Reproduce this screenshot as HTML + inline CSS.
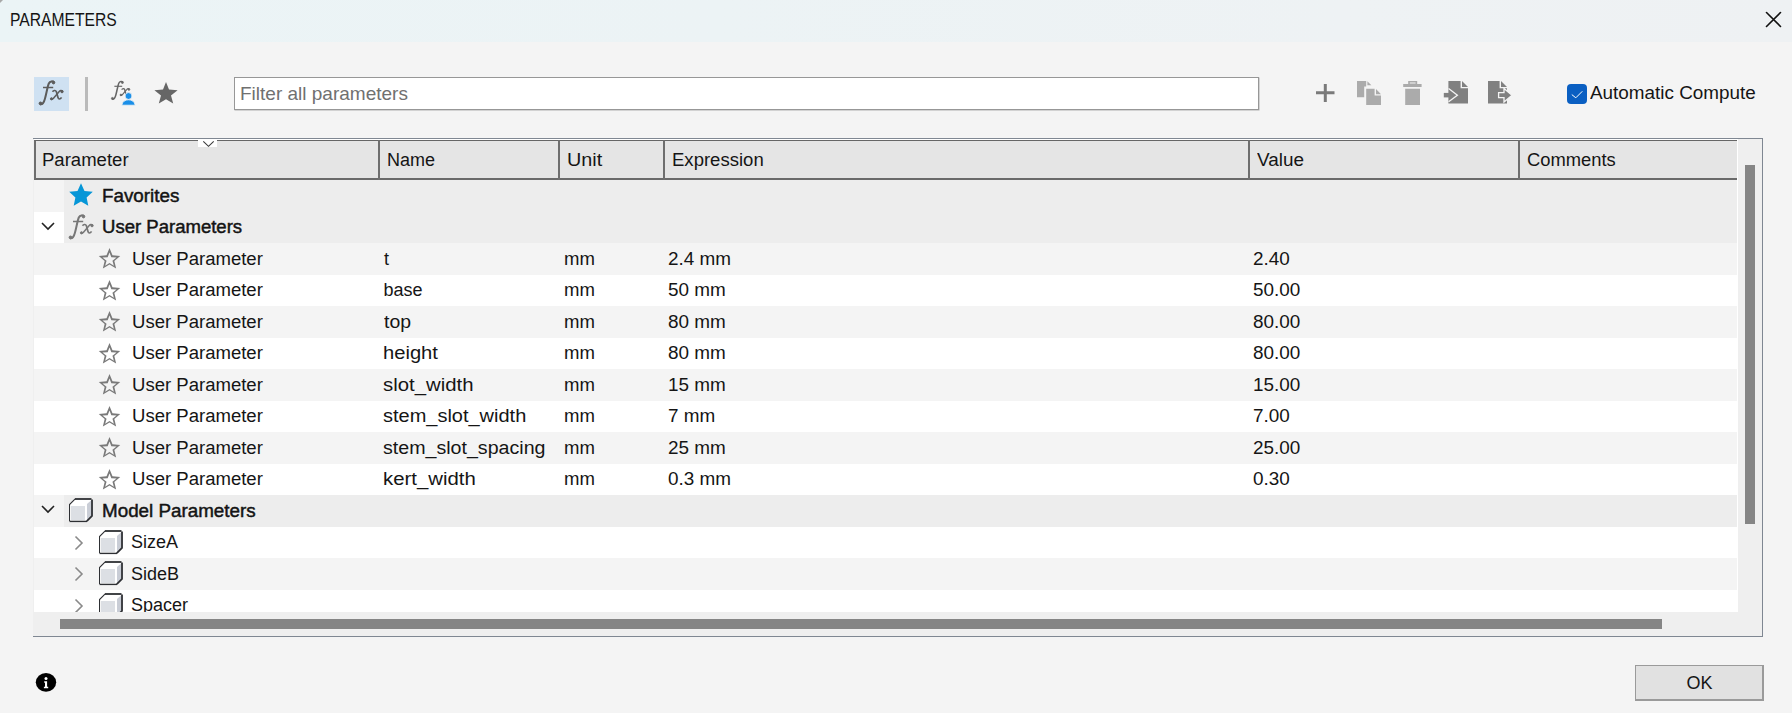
<!DOCTYPE html>
<html><head><meta charset="utf-8">
<style>
*{box-sizing:border-box;margin:0;padding:0}
html,body{width:1792px;height:713px;overflow:hidden;background:#f4f4f4;font-family:"Liberation Sans",sans-serif;font-size:18px;color:#151515;position:relative}
.a{position:absolute}
.t{position:absolute;white-space:pre;line-height:20px}
#title{left:0;top:0;width:1792px;height:42px;background:linear-gradient(90deg,#ebf4f6 0%,#ecf3f5 40%,#eef2f4 75%,#eef1f3 100%)}
.row{position:absolute;left:34px;width:1703px}
.g{background:#f4f4f4}
.w{background:#fff}
.grp{position:absolute;left:30px;right:0;top:0;bottom:0;background:#ededed}
.hdr{position:absolute;top:140px;height:40px;background:#e5e5e5;border-top:1px solid #666;border-bottom:2px solid #6a6a6a}
.sep{position:absolute;top:140px;height:40px;width:2px;background:#6e6e6e}
.b{-webkit-text-stroke:0.45px #111;transform:scaleX(1.045);transform-origin:0 0}
</style></head><body>
<div id="title" class="a"></div>
<div class="a" style="left:0;top:0;width:0;height:0;border-top:3px solid #a8a8a8;border-right:3px solid transparent"></div>
<div class="t" style="left:10px;top:10px;font-size:18px;transform:scaleX(0.87);transform-origin:0 0">PARAMETERS</div>
<svg class="a" style="left:1760px;top:6px" width="28" height="28" viewBox="0 0 28 28"><path d="M6.5 6.5L20.5 20.5M20.5 6.5L6.5 20.5" stroke="#111" stroke-width="1.6" stroke-linecap="round"/></svg>

<!-- toolbar -->
<div class="a" style="left:34px;top:77px;width:35px;height:34px;background:#cfe1f2"></div>
<svg width="0" height="0" style="position:absolute"><defs><g id="fxg">
<path d="M18 4.3C17 3 14 2.8 12.8 5.5C11.5 8.5 10.5 15 9 20.5C8 24.5 6.5 26.8 4.2 26.3" fill="none" stroke-width="2"/>
<circle cx="17.5" cy="4.6" r="1.3"/><circle cx="4.5" cy="25.4" r="1.4"/>
<path d="M7 9.5H17.2" fill="none" stroke-width="1.5"/>
<path d="M16.5 13.8C17.5 12.5 19.5 11.8 20.3 13.5L22 19.5C22.5 21.5 24.3 21.5 25.5 19.3" fill="none" stroke-width="1.7"/>
<path d="M26.3 13C25.5 12.2 24 12.3 23 13.8L17.5 20.3C16.5 21.5 15.5 21.5 15 21" fill="none" stroke-width="1.5"/>
<circle cx="26" cy="13.6" r="1.2"/><circle cx="15.5" cy="20.8" r="1.1"/>
</g></defs></svg>
<svg class="a" style="left:36px;top:78px" width="30" height="30" viewBox="0 0 30 30"><use href="#fxg" fill="#5c5c5c" stroke="#5c5c5c"/></svg>
<div class="a" style="left:85px;top:77px;width:3px;height:34px;background:#bababa"></div>

<svg class="a" style="left:108.5px;top:78.5px" width="23" height="23" viewBox="0 0 30 30"><use href="#fxg" fill="#666" stroke="#666"/></svg>
<svg class="a" style="left:0;top:0" width="1792" height="140" viewBox="0 0 1792 140">
<path d="M128.5 92.6a3.4 3.4 0 1 1 0 6.8a3.4 3.4 0 1 1 0-6.8zM121.8 105.2c0.6-3.6 3.4-5.4 6.7-5.4s6.1 1.8 6.7 5.4z" fill="#1a8fe8" stroke="#f4f4f4" stroke-width="0.8"/>
<path d="M166 82L169 89.6L177.6 90.3L171 95.6L173.2 103.6L166 99.2L158.8 103.6L161 95.6L154.4 90.3L163 89.6Z" fill="#666"/>
<path d="M1316 91.2H1334.5V94.2H1316ZM1323.8 84H1326.8V102H1323.8Z" fill="#7a7a7a"/>
<path d="M1357 81H1366.2V86.5H1364.2V97.2H1357Z" fill="#ababab"/>
<path d="M1367.4 81.2L1371.4 85.2H1367.4Z" fill="#ababab"/>
<path d="M1366.2 88.8H1374.6V95.6H1381V105H1366.2Z" fill="#ababab"/>
<path d="M1376 89L1381 94.3H1376Z" fill="#ababab"/>
<path d="M1409 81.8H1416.4V84.2H1409Z" fill="none" stroke="#ababab" stroke-width="1.6"/>
<path d="M1403.2 84H1421.6V87H1403.2ZM1405.2 88.8H1420V105H1405.2Z" fill="#ababab"/>
<path d="M1448.4 81H1460.6V88.2H1468V103.6H1448.4Z" fill="#808080"/>
<path d="M1462 81L1468 87H1462Z" fill="#808080"/>
<path d="M1443.8 92.9H1449V97.4H1443.8Z" fill="#808080"/>
<path d="M1448.6 88.6L1457.4 95.2L1448.6 101.8" fill="none" stroke="#f4f4f4" stroke-width="1.3"/>
<path d="M1488 81H1499.6V88.2H1507V103.6H1488Z" fill="#808080"/>
<path d="M1501 81L1507 87H1501Z" fill="#808080"/>
<path d="M1498.6 92.6H1504V88.4L1512 95.2L1504 102V97.6H1498.6Z" fill="#808080" stroke="#f4f4f4" stroke-width="1.3" stroke-linejoin="miter"/>
</svg>
<div id="filter" class="a" style="left:234px;top:77px;width:1025px;height:33px;background:#fff;border:1px solid #979797;box-shadow:0.5px 0.5px 0 #b0b0b0"></div>
<div class="t" style="left:240px;top:84px;color:#707070;font-size:19px">Filter all parameters</div>

<div class="a" style="left:1567px;top:84px;width:20px;height:20px;background:#0a5fc2;border-radius:4px"></div>
<svg class="a" style="left:1567px;top:84px" width="20" height="20" viewBox="0 0 20 20"><path d="M4.8 10.6L8.8 13.8L15.3 7.3" stroke="#fff" stroke-width="1" fill="none"/></svg>
<div class="t" style="left:1590px;top:83px;font-size:18.7px;transform:scaleX(1.01);transform-origin:0 0">Automatic Compute</div>

<!-- table frame -->
<div class="a" style="left:33px;top:138px;width:1730px;height:499px;border:1px solid #7f8792;border-left:none;background:#efefef"></div>
<div class="a" style="left:34px;top:139px;width:1704px;height:473px;background:#fff"></div>

<!-- header -->
<div class="hdr" style="left:34px;width:1703px;border-left:2px solid #6e6e6e"></div>
<div class="sep" style="left:378px"></div>
<div class="sep" style="left:558px"></div>
<div class="sep" style="left:663px"></div>
<div class="sep" style="left:1248px"></div>
<div class="sep" style="left:1518px"></div>
<div class="t" style="left:42px;top:150px;transform:scaleX(1.03);transform-origin:0 0">Parameter</div>
<div class="t" style="left:387px;top:150px">Name</div>
<div class="t" style="left:567px;top:150px;transform:scaleX(1.1);transform-origin:0 0">Unit</div>
<div class="t" style="left:672px;top:150px;transform:scaleX(1.03);transform-origin:0 0">Expression</div>
<div class="t" style="left:1256.5px;top:150px;transform:scaleX(1.05);transform-origin:0 0">Value</div>
<div class="t" style="left:1526.5px;top:150px;transform:scaleX(1.02);transform-origin:0 0">Comments</div>
<div class="a" style="left:198px;top:139px;width:19px;height:8px;background:#fff"></div>
<svg class="a" style="left:198px;top:139px" width="19" height="9" viewBox="0 0 19 9"><path d="M5.3 2.3L10.5 7.3L15.7 2.3" stroke="#3a3a3a" stroke-width="1.1" fill="none"/></svg>

<div id="rows" style="position:absolute;left:0;top:0;width:1792px;height:612px;overflow:hidden">
<div class="row g" style="top:180px;height:32px"><div class="grp"></div></div>
<svg class="a" style="left:68px;top:182px" width="26" height="26" viewBox="0 0 26 26"><path d="M13.00 1.30L16.47 8.93L24.79 9.87L18.61 15.52L20.29 23.73L13.00 19.60L5.71 23.73L7.39 15.52L1.21 9.87L9.53 8.93Z" fill="#0696d7"/></svg>
<div class="t b" style="left:101.5px;top:186px">Favorites</div>
<div class="row w" style="top:212px;height:31px"><div class="grp"></div></div>
<svg class="a" style="left:40px;top:220px" width="16" height="12" viewBox="0 0 16 12"><path d="M2 3L8 9L14 3" stroke="#222" stroke-width="1.6" fill="none"/></svg>
<svg class="a" style="left:65.8px;top:212.2px" width="30" height="30" viewBox="0 0 30 30"><use href="#fxg" fill="#777" stroke="#777"/></svg>
<div class="t b" style="left:101.5px;top:217px;transform:scaleX(1.03)">User Parameters</div>
<div class="row g" style="top:243px;height:32px"></div>
<svg class="a" style="left:98px;top:248px" width="24" height="22" viewBox="0 0 24 22"><path d="M11.50 0.10L14.50 7.27L22.25 7.91L16.35 12.98L18.14 20.54L11.50 16.50L4.86 20.54L6.65 12.98L0.75 7.91L8.50 7.27ZM11.50 4.40L13.32 9.29L18.54 9.51L14.45 12.76L15.85 17.79L11.50 14.90L7.15 17.79L8.55 12.76L4.46 9.51L9.68 9.29Z" fill="#7a7a7a" fill-rule="evenodd"/></svg>
<div class="t" style="left:131.5px;top:249px;transform:scaleX(1.03);transform-origin:0 0">User Parameter</div>
<div class="t" style="left:384px;top:249px;transform:scaleX(1.0);transform-origin:0 0">t</div>
<div class="t" style="left:563.5px;top:249px;transform:scaleX(1.03);transform-origin:0 0">mm</div>
<div class="t" style="left:668px;top:249px;transform:scaleX(1.05);transform-origin:0 0">2.4 mm</div>
<div class="t" style="left:1253px;top:249px;transform:scaleX(1.05);transform-origin:0 0">2.40</div>
<div class="row w" style="top:275px;height:31px"></div>
<svg class="a" style="left:98px;top:280px" width="24" height="22" viewBox="0 0 24 22"><path d="M11.50 0.10L14.50 7.27L22.25 7.91L16.35 12.98L18.14 20.54L11.50 16.50L4.86 20.54L6.65 12.98L0.75 7.91L8.50 7.27ZM11.50 4.40L13.32 9.29L18.54 9.51L14.45 12.76L15.85 17.79L11.50 14.90L7.15 17.79L8.55 12.76L4.46 9.51L9.68 9.29Z" fill="#7a7a7a" fill-rule="evenodd"/></svg>
<div class="t" style="left:131.5px;top:280px;transform:scaleX(1.03);transform-origin:0 0">User Parameter</div>
<div class="t" style="left:383.5px;top:280px;transform:scaleX(1.0);transform-origin:0 0">base</div>
<div class="t" style="left:563.5px;top:280px;transform:scaleX(1.03);transform-origin:0 0">mm</div>
<div class="t" style="left:668px;top:280px;transform:scaleX(1.05);transform-origin:0 0">50 mm</div>
<div class="t" style="left:1253px;top:280px;transform:scaleX(1.05);transform-origin:0 0">50.00</div>
<div class="row g" style="top:306px;height:32px"></div>
<svg class="a" style="left:98px;top:311px" width="24" height="22" viewBox="0 0 24 22"><path d="M11.50 0.10L14.50 7.27L22.25 7.91L16.35 12.98L18.14 20.54L11.50 16.50L4.86 20.54L6.65 12.98L0.75 7.91L8.50 7.27ZM11.50 4.40L13.32 9.29L18.54 9.51L14.45 12.76L15.85 17.79L11.50 14.90L7.15 17.79L8.55 12.76L4.46 9.51L9.68 9.29Z" fill="#7a7a7a" fill-rule="evenodd"/></svg>
<div class="t" style="left:131.5px;top:312px;transform:scaleX(1.03);transform-origin:0 0">User Parameter</div>
<div class="t" style="left:383.5px;top:312px;transform:scaleX(1.08);transform-origin:0 0">top</div>
<div class="t" style="left:563.5px;top:312px;transform:scaleX(1.03);transform-origin:0 0">mm</div>
<div class="t" style="left:668px;top:312px;transform:scaleX(1.05);transform-origin:0 0">80 mm</div>
<div class="t" style="left:1253px;top:312px;transform:scaleX(1.05);transform-origin:0 0">80.00</div>
<div class="row w" style="top:338px;height:31px"></div>
<svg class="a" style="left:98px;top:343px" width="24" height="22" viewBox="0 0 24 22"><path d="M11.50 0.10L14.50 7.27L22.25 7.91L16.35 12.98L18.14 20.54L11.50 16.50L4.86 20.54L6.65 12.98L0.75 7.91L8.50 7.27ZM11.50 4.40L13.32 9.29L18.54 9.51L14.45 12.76L15.85 17.79L11.50 14.90L7.15 17.79L8.55 12.76L4.46 9.51L9.68 9.29Z" fill="#7a7a7a" fill-rule="evenodd"/></svg>
<div class="t" style="left:131.5px;top:343px;transform:scaleX(1.03);transform-origin:0 0">User Parameter</div>
<div class="t" style="left:382.7px;top:343px;transform:scaleX(1.12);transform-origin:0 0">height</div>
<div class="t" style="left:563.5px;top:343px;transform:scaleX(1.03);transform-origin:0 0">mm</div>
<div class="t" style="left:668px;top:343px;transform:scaleX(1.05);transform-origin:0 0">80 mm</div>
<div class="t" style="left:1253px;top:343px;transform:scaleX(1.05);transform-origin:0 0">80.00</div>
<div class="row g" style="top:369px;height:32px"></div>
<svg class="a" style="left:98px;top:374px" width="24" height="22" viewBox="0 0 24 22"><path d="M11.50 0.10L14.50 7.27L22.25 7.91L16.35 12.98L18.14 20.54L11.50 16.50L4.86 20.54L6.65 12.98L0.75 7.91L8.50 7.27ZM11.50 4.40L13.32 9.29L18.54 9.51L14.45 12.76L15.85 17.79L11.50 14.90L7.15 17.79L8.55 12.76L4.46 9.51L9.68 9.29Z" fill="#7a7a7a" fill-rule="evenodd"/></svg>
<div class="t" style="left:131.5px;top:375px;transform:scaleX(1.03);transform-origin:0 0">User Parameter</div>
<div class="t" style="left:382.7px;top:375px;transform:scaleX(1.13);transform-origin:0 0">slot_width</div>
<div class="t" style="left:563.5px;top:375px;transform:scaleX(1.03);transform-origin:0 0">mm</div>
<div class="t" style="left:668px;top:375px;transform:scaleX(1.05);transform-origin:0 0">15 mm</div>
<div class="t" style="left:1253px;top:375px;transform:scaleX(1.05);transform-origin:0 0">15.00</div>
<div class="row w" style="top:401px;height:31px"></div>
<svg class="a" style="left:98px;top:406px" width="24" height="22" viewBox="0 0 24 22"><path d="M11.50 0.10L14.50 7.27L22.25 7.91L16.35 12.98L18.14 20.54L11.50 16.50L4.86 20.54L6.65 12.98L0.75 7.91L8.50 7.27ZM11.50 4.40L13.32 9.29L18.54 9.51L14.45 12.76L15.85 17.79L11.50 14.90L7.15 17.79L8.55 12.76L4.46 9.51L9.68 9.29Z" fill="#7a7a7a" fill-rule="evenodd"/></svg>
<div class="t" style="left:131.5px;top:406px;transform:scaleX(1.03);transform-origin:0 0">User Parameter</div>
<div class="t" style="left:382.7px;top:406px;transform:scaleX(1.11);transform-origin:0 0">stem_slot_width</div>
<div class="t" style="left:563.5px;top:406px;transform:scaleX(1.03);transform-origin:0 0">mm</div>
<div class="t" style="left:668px;top:406px;transform:scaleX(1.05);transform-origin:0 0">7 mm</div>
<div class="t" style="left:1253px;top:406px;transform:scaleX(1.05);transform-origin:0 0">7.00</div>
<div class="row g" style="top:432px;height:32px"></div>
<svg class="a" style="left:98px;top:437px" width="24" height="22" viewBox="0 0 24 22"><path d="M11.50 0.10L14.50 7.27L22.25 7.91L16.35 12.98L18.14 20.54L11.50 16.50L4.86 20.54L6.65 12.98L0.75 7.91L8.50 7.27ZM11.50 4.40L13.32 9.29L18.54 9.51L14.45 12.76L15.85 17.79L11.50 14.90L7.15 17.79L8.55 12.76L4.46 9.51L9.68 9.29Z" fill="#7a7a7a" fill-rule="evenodd"/></svg>
<div class="t" style="left:131.5px;top:438px;transform:scaleX(1.03);transform-origin:0 0">User Parameter</div>
<div class="t" style="left:382.7px;top:438px;transform:scaleX(1.09);transform-origin:0 0">stem_slot_spacing</div>
<div class="t" style="left:563.5px;top:438px;transform:scaleX(1.03);transform-origin:0 0">mm</div>
<div class="t" style="left:668px;top:438px;transform:scaleX(1.05);transform-origin:0 0">25 mm</div>
<div class="t" style="left:1253px;top:438px;transform:scaleX(1.05);transform-origin:0 0">25.00</div>
<div class="row w" style="top:464px;height:31px"></div>
<svg class="a" style="left:98px;top:469px" width="24" height="22" viewBox="0 0 24 22"><path d="M11.50 0.10L14.50 7.27L22.25 7.91L16.35 12.98L18.14 20.54L11.50 16.50L4.86 20.54L6.65 12.98L0.75 7.91L8.50 7.27ZM11.50 4.40L13.32 9.29L18.54 9.51L14.45 12.76L15.85 17.79L11.50 14.90L7.15 17.79L8.55 12.76L4.46 9.51L9.68 9.29Z" fill="#7a7a7a" fill-rule="evenodd"/></svg>
<div class="t" style="left:131.5px;top:469px;transform:scaleX(1.03);transform-origin:0 0">User Parameter</div>
<div class="t" style="left:382.7px;top:469px;transform:scaleX(1.13);transform-origin:0 0">kert_width</div>
<div class="t" style="left:563.5px;top:469px;transform:scaleX(1.03);transform-origin:0 0">mm</div>
<div class="t" style="left:668px;top:469px;transform:scaleX(1.05);transform-origin:0 0">0.3 mm</div>
<div class="t" style="left:1253px;top:469px;transform:scaleX(1.05);transform-origin:0 0">0.30</div>
<div class="row g" style="top:495px;height:32px"><div class="grp"></div></div>
<svg class="a" style="left:40px;top:503px" width="16" height="12" viewBox="0 0 16 12"><path d="M2 3L8 9L14 3" stroke="#222" stroke-width="1.6" fill="none"/></svg>
<svg class="a" style="left:69px;top:498px" width="25" height="25" viewBox="0 0 25 25"><path d="M0.5 6.5L6.5 0.5H23.5V17.5L17.5 23.5H0.5Z" fill="#fff"/><path d="M2 8H16V22H2Z" fill="#dcdfe4"/><path d="M18 6L22 2.5V17.5L18 21.5Z" fill="#c9cdd6"/><path d="M0.5 23V6.5L6.2 0.8" fill="none" stroke="#2d2f33" stroke-width="1.1"/><path d="M6 1H22.5" fill="none" stroke="#2d2f33" stroke-width="1.8"/><path d="M23 1.5V17.8L17.8 23.2" fill="none" stroke="#2d2f33" stroke-width="1.8"/><path d="M0.5 23.4H18" fill="none" stroke="#2d2f33" stroke-width="1.4"/></svg>
<div class="t b" style="left:101.5px;top:501px">Model Parameters</div>
<div class="row w" style="top:527px;height:31px"></div>
<svg class="a" style="left:72px;top:535px" width="14" height="16" viewBox="0 0 14 16"><path d="M3.5 1.5L10 8L3.5 14.5" stroke="#8a8a8a" stroke-width="1.6" fill="none"/></svg>
<svg class="a" style="left:99px;top:530px" width="25" height="25" viewBox="0 0 25 25"><path d="M0.5 6.5L6.5 0.5H23.5V17.5L17.5 23.5H0.5Z" fill="#fff"/><path d="M2 8H16V22H2Z" fill="#dcdfe4"/><path d="M18 6L22 2.5V17.5L18 21.5Z" fill="#c9cdd6"/><path d="M0.5 23V6.5L6.2 0.8" fill="none" stroke="#2d2f33" stroke-width="1.1"/><path d="M6 1H22.5" fill="none" stroke="#2d2f33" stroke-width="1.8"/><path d="M23 1.5V17.8L17.8 23.2" fill="none" stroke="#2d2f33" stroke-width="1.8"/><path d="M0.5 23.4H18" fill="none" stroke="#2d2f33" stroke-width="1.4"/></svg>
<div class="t" style="left:131px;top:532px">SizeA</div>
<div class="row g" style="top:558px;height:32px"></div>
<svg class="a" style="left:72px;top:566px" width="14" height="16" viewBox="0 0 14 16"><path d="M3.5 1.5L10 8L3.5 14.5" stroke="#8a8a8a" stroke-width="1.6" fill="none"/></svg>
<svg class="a" style="left:99px;top:561px" width="25" height="25" viewBox="0 0 25 25"><path d="M0.5 6.5L6.5 0.5H23.5V17.5L17.5 23.5H0.5Z" fill="#fff"/><path d="M2 8H16V22H2Z" fill="#dcdfe4"/><path d="M18 6L22 2.5V17.5L18 21.5Z" fill="#c9cdd6"/><path d="M0.5 23V6.5L6.2 0.8" fill="none" stroke="#2d2f33" stroke-width="1.1"/><path d="M6 1H22.5" fill="none" stroke="#2d2f33" stroke-width="1.8"/><path d="M23 1.5V17.8L17.8 23.2" fill="none" stroke="#2d2f33" stroke-width="1.8"/><path d="M0.5 23.4H18" fill="none" stroke="#2d2f33" stroke-width="1.4"/></svg>
<div class="t" style="left:131px;top:564px">SideB</div>
<div class="row w" style="top:590px;height:22px"></div>
<svg class="a" style="left:72px;top:598px" width="14" height="16" viewBox="0 0 14 16"><path d="M3.5 1.5L10 8L3.5 14.5" stroke="#8a8a8a" stroke-width="1.6" fill="none"/></svg>
<svg class="a" style="left:99px;top:593px" width="25" height="25" viewBox="0 0 25 25"><path d="M0.5 6.5L6.5 0.5H23.5V17.5L17.5 23.5H0.5Z" fill="#fff"/><path d="M2 8H16V22H2Z" fill="#dcdfe4"/><path d="M18 6L22 2.5V17.5L18 21.5Z" fill="#c9cdd6"/><path d="M0.5 23V6.5L6.2 0.8" fill="none" stroke="#2d2f33" stroke-width="1.1"/><path d="M6 1H22.5" fill="none" stroke="#2d2f33" stroke-width="1.8"/><path d="M23 1.5V17.8L17.8 23.2" fill="none" stroke="#2d2f33" stroke-width="1.8"/><path d="M0.5 23.4H18" fill="none" stroke="#2d2f33" stroke-width="1.4"/></svg>
<div class="t" style="left:131px;top:595px">Spacer</div>
</div><!--/rows-->

<!-- scrollbars -->
<div class="a" style="left:1738px;top:140px;width:24px;height:472px;background:#efefef"></div>
<div class="a" style="left:1745px;top:165px;width:10px;height:359px;background:#858585"></div>
<div class="a" style="left:34px;top:612px;width:1728px;height:24px;background:#efefef"></div>
<div class="a" style="left:60px;top:619px;width:1602px;height:10px;background:#858585"></div>

<!-- footer -->
<svg class="a" style="left:35px;top:672px" width="22" height="22" viewBox="0 0 22 22"><ellipse cx="11" cy="10.3" rx="10.2" ry="9.4" fill="#000"/><circle cx="11" cy="6.6" r="1.5" fill="#fff"/><path d="M9.2 9.2h2.9v5.6h1.1v1.5H8.9v-1.5h1.1v-4.1h-0.8z" fill="#fff"/></svg>
<div class="a" style="left:1635px;top:665px;width:129px;height:36px;background:#e1e1e1;border:1px solid #9a9a9a;border-right-width:2px;border-bottom-width:2px"></div>
<div class="t" style="left:1686.5px;top:673px">OK</div>
</body></html>
